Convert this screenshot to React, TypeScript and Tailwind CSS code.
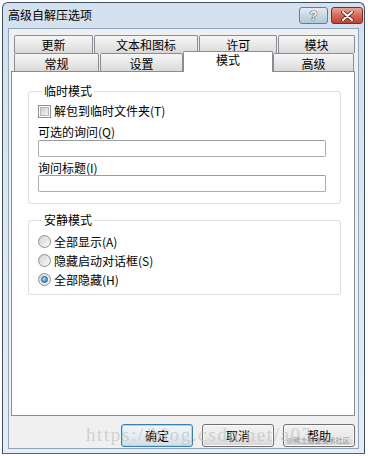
import React from 'react'

const tabBase =
  'flex items-center justify-center border border-b-0 border-[#898c95] rounded-t-[2px] bg-linear-to-b from-[#f6f6f6] via-[#e9e9e9] to-[#d9d9d9] leading-[14px]'

function Tab({ children, className }: { children: React.ReactNode; className: string }) {
  return <div className={`${tabBase} ${className}`}>{children}</div>
}

function CheckBox() {
  return (
    <span className="flex h-[13px] w-[13px] shrink-0 items-center justify-center border border-[#8e8f8f] bg-white">
      <span className="h-[9px] w-[9px] border border-[#b4b8bd] bg-linear-to-br from-[#c9ccd1] to-[#f4f4f4]" />
    </span>
  )
}

function Radio({ checked }: { checked?: boolean }) {
  return (
    <span className="flex h-[13px] w-[13px] shrink-0 items-center justify-center rounded-full border border-[#8e8f8f] bg-linear-to-br from-[#cfd2d6] to-[#fbfbfb]">
      {checked && (
        <span className="h-[7px] w-[7px] rounded-full border border-[#1d5f96] bg-[radial-gradient(circle_at_35%_35%,#a8dcfb,#1b70b5)]" />
      )}
    </span>
  )
}

function Button({ children, focused }: { children: React.ReactNode; focused?: boolean }) {
  return (
    <button
      className={
        focused
          ? 'h-[23px] w-[72px] rounded-[3px] border border-[#3c7fb1] bg-linear-to-b from-[#f2f7fb] via-[#e6eef5] to-[#d3dde6] text-[12px] leading-[14px] shadow-[inset_0_0_0_1px_#a9d6f3]'
          : 'h-[23px] w-[72px] rounded-[3px] border border-[#707070] bg-linear-to-b from-[#f2f2f2] via-[#ebebeb] to-[#d5d5d5] text-[12px] leading-[14px] shadow-[inset_0_0_0_1px_#fbfbfb]'
      }
    >
      {children}
    </button>
  )
}

export default function App() {
  return (
    <div className="relative h-[456px] w-[368px] bg-white pl-[2px] pt-[2px] font-['Noto_Sans_CJK_SC',sans-serif] text-[12px] text-black">
      <div className="flex h-[452px] w-[363px] flex-col rounded-t-[6px] border border-[#3e4f63] border-b-[#3d6c87] bg-linear-to-b from-[#d3e0ee] via-[#dde7f2] to-[#e4ecf4]">
        {/* title bar */}
        <div className="flex h-[25px] items-start justify-between pl-[5px] pr-[1px]">
          <span className="mt-[5px] leading-[14px]">高级自解压选项</span>
          <div className="mt-[4px] flex gap-[3px]">
            <div className="flex h-[17px] w-[29px] items-center justify-center rounded-[3px] border border-[#6d7d8f] bg-linear-to-b from-[#e3ebf3] via-[#cbd8e5] to-[#b3c5d8]">
              <span className="font-['Liberation_Sans',sans-serif] text-[13px] font-bold leading-[13px] text-white [text-shadow:0_0_1px_#34414f,0_0_1px_#34414f,0_0_1px_#34414f]">
                ?
              </span>
            </div>
            <div className="flex h-[17px] w-[32px] items-center justify-center rounded-[3px] border border-[#7b2d24] bg-linear-to-b from-[#e6a597] via-[#d46a5a] to-[#c0402f]">
              <svg width="13" height="10" viewBox="0 0 13 10">
                <path d="M2 1 L11 9 M11 1 L2 9" stroke="#5a1a14" strokeWidth="3.6" strokeLinecap="round" />
                <path d="M2 1 L11 9 M11 1 L2 9" stroke="#ffffff" strokeWidth="2" strokeLinecap="round" />
              </svg>
            </div>
          </div>
        </div>

        {/* client area */}
        <div className="mx-[5px] flex h-[421px] flex-col border border-[#8ea4ba] bg-[#f0f0f0] pl-[2px] pr-[3px] pt-[6px]">
          <div className="flex h-[18px] pl-[3px]">
            <Tab className="w-[79px]">更新</Tab>
            <Tab className="ml-px w-[105px]">文本和图标</Tab>
            <Tab className="ml-px w-[78px]">许可</Tab>
            <Tab className="ml-px w-[77px]">模块</Tab>
          </div>
          <div className="flex h-[18px] items-end pl-[3px]">
            <Tab className="h-[18px] w-[85px] pt-[2px]">常规</Tab>
            <Tab className="ml-px h-[18px] w-[83px] pt-[2px]">设置</Tab>
            <div className="relative z-10 -mb-px flex h-[21px] w-[90px] justify-center rounded-t-[2px] border border-b-0 border-[#898c95] bg-white pt-[1px] leading-[14px]">
              模式
            </div>
            <Tab className="h-[18px] w-[81px] pt-[2px]">高级</Tab>
          </div>

          {/* tab panel */}
          <div className="h-[345px] border border-[#898c95] bg-white">
            <fieldset className="ml-[16px] mt-[12px] w-[313px] rounded-[3px] border border-[#d5dfe5] pb-[11px] pl-[9px]">
              <legend className="ml-[4px] px-[2px] leading-[14px]">临时模式</legend>
              <div className="mt-[5px] flex h-[16px] items-center gap-[3px]">
                <CheckBox />
                <span className="leading-[14px]">解包到临时文件夹(T)</span>
              </div>
              <div className="mt-[6px] h-[14px] leading-[14px]">可选的询问(Q)</div>
              <div className="mt-px h-[17px] w-[288px] rounded-[2px] border border-[#abadb3] border-t-[#9a9ca3] bg-white" />
              <div className="mt-[4px] h-[14px] leading-[14px]">询问标题(I)</div>
              <div className="h-[17px] w-[288px] rounded-[2px] border border-[#abadb3] border-t-[#9a9ca3] bg-white" />
            </fieldset>

            <fieldset className="ml-[16px] mt-[9px] w-[313px] rounded-[3px] border border-[#d5dfe5] pb-[5px] pl-[9px]">
              <legend className="ml-[4px] px-[2px] leading-[14px]">安静模式</legend>
              <div className="mt-[5px] flex h-[19px] items-center gap-[3px]">
                <Radio />
                <span className="leading-[14px]">全部显示(A)</span>
              </div>
              <div className="flex h-[19px] items-center gap-[3px]">
                <Radio />
                <span className="leading-[14px]">隐藏启动对话框(S)</span>
              </div>
              <div className="flex h-[19px] items-center gap-[3px]">
                <Radio checked />
                <span className="leading-[14px]">全部隐藏(H)</span>
              </div>
            </fieldset>
          </div>

          <div className="mt-[8px] flex justify-end gap-[9px]">
            <Button focused>确定</Button>
            <Button>取消</Button>
            <Button>帮助</Button>
          </div>
        </div>
      </div>

      {/* watermark overlay */}
      <div className="pointer-events-none absolute left-[86px] top-[425px] font-['Liberation_Serif',serif] text-[19px] leading-[20px] tracking-[1.6px] text-[#c4c4c4] opacity-70">
        https://blog.csdn.net/a03
      </div>
      <div className="pointer-events-none absolute left-[287px] top-[436px] text-[7px] leading-[8px] text-[#8a8a8a] opacity-80">
        @稀土掘金技术社区
      </div>
    </div>
  )
}
